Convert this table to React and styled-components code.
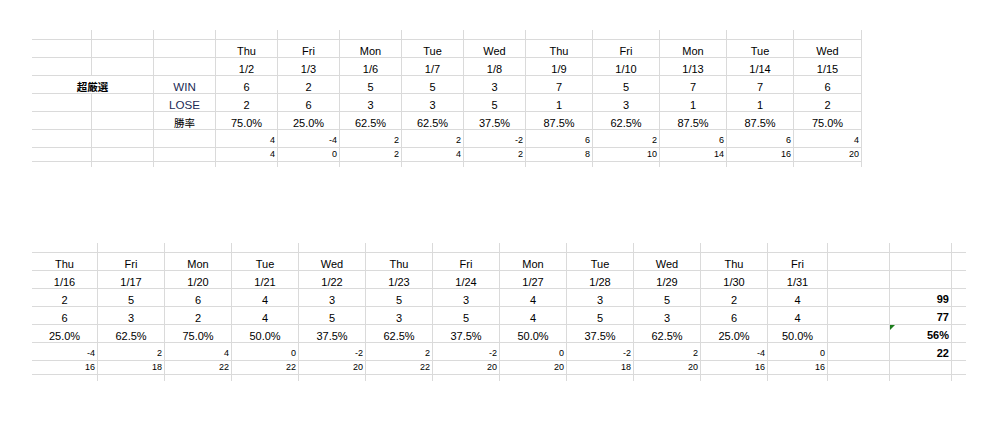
import styled, { createGlobalStyle, css } from 'styled-components'

const GlobalStyle = createGlobalStyle`
  body {
    margin: 0;
    background: #fff;
    font-family: "Liberation Sans", Arial, sans-serif;
    color: #000;
  }
`

const LINE = '1px solid #dadada'

const Page = styled.div`
  padding-top: 30px;
  display: flex;
  flex-direction: column;
  gap: 76px;
`

const Sheet = styled.div`
  display: grid;
  grid-template-columns: ${p => p.$cols};
  grid-template-rows: ${p => p.$rows};
  margin-left: 32px;
  width: max-content;
`

const sizes = {
  md: css`
    font-size: 11px;
    padding-bottom: 0;
  `,
  sm: css`
    font-size: 9px;
    padding-bottom: 2px;
  `,
  total: css`
    font-size: 11px;
    font-weight: bold;
    padding-bottom: 1px;
  `,
  label: css`
    font-size: 11.6px;
    color: #1b2a55;
    padding-bottom: 0;
  `,
  cjk: css`
    font-family: "Liberation Sans", "Noto Sans CJK JP", sans-serif;
    font-size: 10.5px;
    padding-bottom: 1px;
  `,
}

const Cell = styled.div`
  box-sizing: border-box;
  position: relative;
  display: flex;
  align-items: flex-end;
  justify-content: ${p => (p.$align === 'right' ? 'flex-end' : 'center')};
  padding-left: 2px;
  padding-right: 2px;
  grid-column: span ${p => p.$span || 1};
  border-right: ${p => (p.$noRight ? 'none' : LINE)};
  border-bottom: ${p => (p.$noBottom ? 'none' : LINE)};
  line-height: 1;
  white-space: nowrap;
  ${p => sizes[p.$size || 'md']}
  ${p => p.$bold && 'font-weight: bold;'}
`

const Flagged = styled(Cell)`
  &::before {
    content: '';
    position: absolute;
    left: 0;
    top: 0;
    border-top: 5px solid #1d7d1d;
    border-right: 5px solid transparent;
  }
`

const top = {
  days: ['Thu', 'Fri', 'Mon', 'Tue', 'Wed', 'Thu', 'Fri', 'Mon', 'Tue', 'Wed'],
  dates: ['1/2', '1/3', '1/6', '1/7', '1/8', '1/9', '1/10', '1/13', '1/14', '1/15'],
  win: [6, 2, 5, 5, 3, 7, 5, 7, 7, 6],
  lose: [2, 6, 3, 3, 5, 1, 3, 1, 1, 2],
  rate: ['75.0%', '25.0%', '62.5%', '62.5%', '37.5%', '87.5%', '62.5%', '87.5%', '87.5%', '75.0%'],
  diff: [4, -4, 2, 2, -2, 6, 2, 6, 6, 4],
  sum: [4, 0, 2, 4, 2, 8, 10, 14, 16, 20],
}

const bottom = {
  days: ['Thu', 'Fri', 'Mon', 'Tue', 'Wed', 'Thu', 'Fri', 'Mon', 'Tue', 'Wed', 'Thu', 'Fri'],
  dates: ['1/16', '1/17', '1/20', '1/21', '1/22', '1/23', '1/24', '1/27', '1/28', '1/29', '1/30', '1/31'],
  win: [2, 5, 6, 4, 3, 5, 3, 4, 3, 5, 2, 4],
  lose: [6, 3, 2, 4, 5, 3, 5, 4, 5, 3, 6, 4],
  rate: ['25.0%', '62.5%', '75.0%', '50.0%', '37.5%', '62.5%', '37.5%', '50.0%', '37.5%', '62.5%', '25.0%', '50.0%'],
  diff: [-4, 2, 4, 0, -2, 2, -2, 0, -2, 2, -4, 0],
  sum: [16, 18, 22, 22, 20, 22, 20, 20, 18, 20, 16, 16],
}

const dataRows = [
  { key: 'days', size: 'md' },
  { key: 'dates', size: 'md' },
  { key: 'win', size: 'md' },
  { key: 'lose', size: 'md' },
  { key: 'rate', size: 'md' },
  { key: 'diff', size: 'sm', align: 'right' },
  { key: 'sum', size: 'sm', align: 'right' },
]

const blanks = (n, prefix, extra = {}) =>
  Array.from({ length: n }, (_, i) => <Cell key={`${prefix}${i}`} {...extra} />)

function TopSheet() {
  const labels = {
    win: [<Cell key="l" $span={2} $bold $size="cjk">超厳選</Cell>, <Cell key="w" $size="label">WIN</Cell>],
    lose: [...blanks(2, 'b'), <Cell key="w" $size="label">LOSE</Cell>],
    rate: [...blanks(2, 'b'), <Cell key="w" $size="cjk">勝率</Cell>],
  }
  return (
    <Sheet
      $cols="60px repeat(7, 62px) repeat(4, 67px) 68px"
      $rows="10px repeat(6, 18px) 14px 5px"
    >
      {blanks(13, 'stub')}
      {dataRows.map(row => (
        <Row key={row.key}>
          {labels[row.key] || blanks(3, 'b')}
          {top[row.key].map((v, i) => (
            <Cell key={i} $size={row.size} $align={row.align}>
              {v}
            </Cell>
          ))}
        </Row>
      ))}
      {blanks(13, 'tail', { $noBottom: true })}
    </Sheet>
  )
}

function Row({ children }) {
  return <>{children}</>
}

const totals = { win: 99, lose: 77, rate: '56%', diff: 22 }

function BottomSheet() {
  return (
    <Sheet
      $cols="66px repeat(10, 67px) 60px 62px 62px 14px"
      $rows="10px repeat(6, 18px) 14px 6px"
    >
      {blanks(14, 'stub')}
      <Cell $noRight />
      {dataRows.map(row => {
        const Total = row.key === 'rate' ? Flagged : Cell
        return (
          <Row key={row.key}>
            {bottom[row.key].map((v, i) => (
              <Cell key={i} $size={row.size} $align={row.align}>
                {v}
              </Cell>
            ))}
            <Cell />
            <Total $size="total" $align="right">
              {totals[row.key]}
            </Total>
            <Cell $noRight />
          </Row>
        )
      })}
      {blanks(14, 'tail', { $noBottom: true })}
      <Cell $noRight $noBottom />
    </Sheet>
  )
}

export default function App() {
  return (
    <>
      <GlobalStyle />
      <Page>
        <TopSheet />
        <BottomSheet />
      </Page>
    </>
  )
}
